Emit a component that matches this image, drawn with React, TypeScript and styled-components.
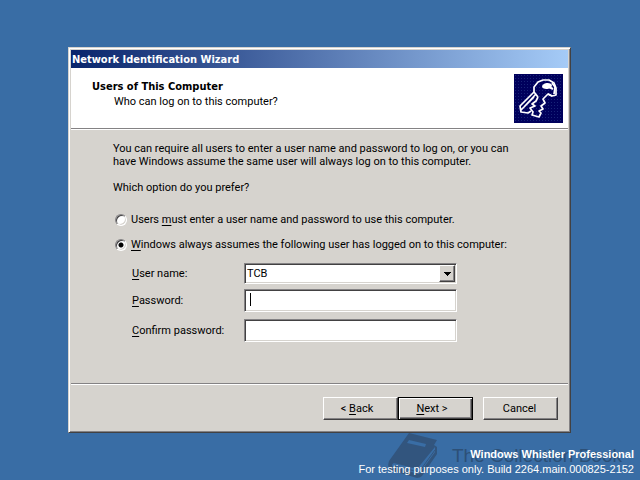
import React from "react";
import styled, { createGlobalStyle, css } from "styled-components";

const face = "#d6d3ce";
const ui = 'Roboto, "DejaVu Sans", sans-serif';
const uiBold = '"DejaVu Sans Condensed", "DejaVu Sans", sans-serif';

const Global = createGlobalStyle`
  * { box-sizing: border-box; }
  body { margin: 0; background: #396da5; }
  button, input, select { font: inherit; color: inherit; }
`;

const Desktop = styled.div`
  min-height: 100vh;
  display: flex;
  flex-direction: column;
  padding-top: 47px;
  background: #396da5;
  font: 11px/13px ${ui};
  color: #000;
`;

const Dialog = styled.main`
  margin: 0 69px 0 68px;
  padding: 1px;
  background: ${face};
  border: 1px solid;
  border-color: ${face} #424142 #424142 ${face};
  box-shadow: inset 1px 1px #fff, inset -1px -1px #848284;
`;

const Frame = styled.div`
  padding: 1px;
`;

const TitleBar = styled.header`
  height: 18px;
  padding: 3px 1px;
  color: #fff;
  font: bold 11px/13px ${uiBold};
  background: linear-gradient(to right, #08246b, #a5cbf7);
`;

const Banner = styled.section`
  display: flex;
  justify-content: space-between;
  align-items: flex-start;
  padding: 6px 5px 5px 21px;
  background: #fff;
`;

const Heading = styled.h1`
  margin: 6px 0 2px;
  font: bold 11px/13px ${uiBold};
`;

const Subheading = styled.p`
  margin: 0 0 0 22px;
`;

const Groove = styled.hr`
  height: 2px;
  margin: 0;
  border: 0;
  border-top: 1px solid #848284;
  border-bottom: 1px solid #fff;
`;

const Body = styled.form`
  padding: 12px 42px 41px;
`;

const Paragraph = styled.p`
  margin: 0 0 13px;
`;

const Choice = styled.label`
  display: flex;
  align-items: center;
  gap: 4px;
  width: fit-content;
  height: 13px;
  margin: 19px 0 12px 2px;
  & + & { margin-top: 0; }
`;

const Radio = styled.input`
  appearance: none;
  width: 12px;
  height: 12px;
  margin: 0;
  border: 1px solid;
  border-color: #848284 #fff #fff #848284;
  border-radius: 50%;
  background: #fff;
  box-shadow: inset 1px 1px #424142, inset -1px -1px ${face};
  &:checked { background: radial-gradient(circle at 5px 5px, #000 2px, #fff 3px); }
`;

const Fields = styled.div`
  display: grid;
  grid-template-columns: 112px minmax(80px, 213px);
  align-items: center;
  margin: 12px 0 0 19px;
`;

const sunken = css`
  width: 100%;
  border: 1px solid;
  border-color: #848284 #fff #fff #848284;
  border-radius: 0;
  background: #fff;
  box-shadow: inset 1px 1px #424142, inset -1px -1px ${face};
  outline: 0;
`;

const FieldBox = styled.div<{ $gap?: number }>`
  position: relative;
  display: flex;
  margin-bottom: ${(p) => p.$gap ?? 0}px;
`;

const FieldLabel = styled.label<{ $gap?: number }>`
  margin-bottom: ${(p) => p.$gap ?? 0}px;
`;

const Select = styled.select`
  ${sunken}
  appearance: none;
  height: 21px;
  padding: 0 20px 0 2px;
`;

const TextBox = styled.input`
  ${sunken}
  height: 23px;
  padding: 0 5px;
`;

const raised = css`
  border: 1px solid;
  border-color: #fff #424142 #424142 #fff;
  background: ${face};
  box-shadow: inset -1px -1px #848284;
`;

const Arrow = styled.span`
  ${raised}
  position: absolute;
  top: 2px;
  right: 2px;
  width: 16px;
  height: 17px;
  display: grid;
  place-items: center;
  pointer-events: none;
`;

const Caret = styled.span`
  position: absolute;
  left: 6px;
  top: 4px;
  width: 1px;
  height: 13px;
  background: #000;
`;

const Actions = styled.footer`
  display: flex;
  justify-content: flex-end;
  padding: 12px 10px 10px;
`;

const Button = styled.button<{ $primary?: boolean; $apart?: boolean }>`
  ${raised}
  width: 75px;
  height: 23px;
  padding: 0 7px 1px 0;
  ${(p) =>
    p.$primary &&
    css`
      border-color: #000;
      box-shadow: inset 1px 1px #fff, inset -1px -1px #424142, inset -2px -2px #848284;
    `}
  ${(p) => p.$apart && css`margin-left: 10px; padding-right: 2px;`}
`;

const Key = styled.span`
  text-decoration: underline 1px;
  text-underline-offset: 2px;
`;

const BuildInfo = styled.aside`
  position: relative;
  margin-top: auto;
  padding: 0 6px 3px 0;
  text-align: right;
  color: #fff;
  font: 11px/15px "Liberation Sans", Arial, sans-serif;
`;

const Edition = styled.strong`
  position: relative;
  display: block;
`;

const Build = styled.span`
  position: relative;
`;

const Watermark = styled.div`
  position: absolute;
  right: 18px;
  bottom: 1px;
  display: flex;
  align-items: center;
  gap: 14px;
  color: #2d5077;
  font: 19px/20px "Liberation Sans", Arial, sans-serif;
`;

function KeysIcon() {
  return (
    <svg width="49" height="49" viewBox="0 0 49 49" aria-hidden="true">
      <defs>
        <pattern id="dots" width="3" height="3" patternUnits="userSpaceOnUse">
          <rect width="3" height="3" fill="#00005c" />
          <rect x="1" y="1" width="1" height="1" fill="#182478" />
        </pattern>
      </defs>
      <rect width="49" height="49" fill="url(#dots)" />
      <g fill="none" stroke="#fff" strokeWidth="1.7" strokeLinejoin="round">
        <path d="M20 18V13L24 8L29 6H35L40 9L42 14V21L38 22L34 20" />
        <path d="M20 18L6 32L7 38L14 39L17 37M22 20L10 33M20 18L24 23M7 36L20 23" />
        <path d="M24 23L22 27L18 30L21 32L16 34L19 38L18 41L25 43L27 39L25 37L29 35L27 32L31 29L29 25L34 20L38 22" />
        <path d="M38 9L41 13L40 20" />
      </g>
      <ellipse cx="33" cy="12" rx="5" ry="3" fill="#fff" transform="rotate(-8 33 12)" />
      <path d="M35 13L39 15" stroke="#fff" strokeWidth="2" />
    </svg>
  );
}

function BookIcon() {
  return (
    <svg width="50" height="47" viewBox="0 0 50 47" aria-hidden="true">
      <path d="M21 1L49 8L46 13L49 15V22L34 44Q32 46 29 46L2 38Q-1 35 1 29Z" fill="#32557e" />
      <path d="M21 8L38 12L37 15L19 11Z" fill="#396da5" />
      <path d="M47 15V20L31 42L5 35Q3 32 6 31L29 37Z" fill="#396da5" />
      <path d="M47 18L31 40L6 34" fill="none" stroke="#32557e" strokeWidth="1" />
    </svg>
  );
}

export default function App() {
  return (
    <>
      <Global />
      <Desktop>
        <Dialog>
          <Frame>
            <TitleBar>Network Identification Wizard</TitleBar>
            <Banner>
              <div>
                <Heading>Users of This Computer</Heading>
                <Subheading>Who can log on to this computer?</Subheading>
              </div>
              <KeysIcon />
            </Banner>
            <Groove />
            <Body id="wizard" onSubmit={(e) => e.preventDefault()}>
              <Paragraph>
                You can require all users to enter a user name and password to log on, or you can
                <br />
                have Windows assume the same user will always log on to this computer.
              </Paragraph>
              <Paragraph>Which option do you prefer?</Paragraph>
              <Choice>
                <Radio type="radio" name="mode" />
                <span>Users <Key>m</Key>ust enter a user name and password to use this computer.</span>
              </Choice>
              <Choice>
                <Radio type="radio" name="mode" defaultChecked />
                <span><Key>W</Key>indows always assumes the following user has logged on to this computer:</span>
              </Choice>
              <Fields>
                <FieldLabel htmlFor="user" $gap={5}><Key>U</Key>ser name:</FieldLabel>
                <FieldBox $gap={5}>
                  <Select id="user">
                    <option>TCB</option>
                  </Select>
                  <Arrow>
                    <svg width="7" height="4" viewBox="0 0 7 4" shapeRendering="crispEdges">
                      <path d="M0 0H7L4 4H3Z" />
                    </svg>
                  </Arrow>
                </FieldBox>
                <FieldLabel htmlFor="password" $gap={7}><Key>P</Key>assword:</FieldLabel>
                <FieldBox $gap={7}>
                  <TextBox id="password" type="password" />
                  <Caret />
                </FieldBox>
                <FieldLabel htmlFor="confirm"><Key>C</Key>onfirm password:</FieldLabel>
                <FieldBox>
                  <TextBox id="confirm" type="password" />
                </FieldBox>
              </Fields>
            </Body>
            <Groove />
            <Actions>
              <Button type="button">&lt; <Key>B</Key>ack</Button>
              <Button type="submit" form="wizard" $primary><Key>N</Key>ext &gt;</Button>
              <Button type="button" $apart>Cancel</Button>
            </Actions>
          </Frame>
        </Dialog>
        <BuildInfo>
          <Watermark>
            <BookIcon />
            The Collection Book
          </Watermark>
          <Edition>Windows Whistler Professional</Edition>
          <Build>For testing purposes only. Build 2264.main.000825-2152</Build>
        </BuildInfo>
      </Desktop>
    </>
  );
}
